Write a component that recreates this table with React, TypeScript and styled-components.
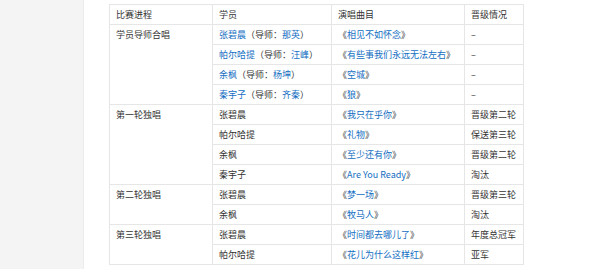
import React from "react";
import styled, { createGlobalStyle } from "styled-components";

const Global = createGlobalStyle`
  html, body { margin: 0; padding: 0; background: #ffffff; }
  body { font-family: "Noto Sans CJK SC", "Liberation Sans", sans-serif; }
`;

const Page = styled.div`
  display: flex;
  width: 600px;
  height: 269px;
  overflow: hidden;
`;

const Sidebar = styled.div`
  width: 84px;
  flex: none;
  background: #f4f4f4;
  border-right: 1px solid #ececec;
  box-sizing: border-box;
`;

const Main = styled.div`
  flex: 1;
  padding: 4px 0 0 25px;
  background: #ffffff;
`;

const Table = styled.table`
  border-collapse: collapse;
  table-layout: fixed;
  width: 414px;
  font-size: 9px;
  color: #333;
`;

const Row = styled.tr`
  height: 20px;
`;

const Cell = styled.td<{ $head?: boolean }>`
  border: 1px solid #e6e6e6;
  padding: 0 6px;
  line-height: 19px;
  vertical-align: top;
  white-space: nowrap;
  overflow: hidden;
  color: #333;
`;

const Link = styled.a`
  color: #136ec2;
  text-decoration: none;
`;

type Entry = {
  name: string;
  mentor?: string;
  song: string;
  result: string;
};

type Stage = { title: string; entries: Entry[] };

const stages: Stage[] = [
  {
    title: "学员导师合唱",
    entries: [
      { name: "张碧晨", mentor: "那英", song: "相见不如怀念", result: "–" },
      { name: "帕尔哈提", mentor: "汪峰", song: "有些事我们永远无法左右", result: "–" },
      { name: "余枫", mentor: "杨坤", song: "空城", result: "–" },
      { name: "秦宇子", mentor: "齐秦", song: "狼", result: "–" },
    ],
  },
  {
    title: "第一轮独唱",
    entries: [
      { name: "张碧晨", song: "我只在乎你", result: "晋级第二轮" },
      { name: "帕尔哈提", song: "礼物", result: "保送第三轮" },
      { name: "余枫", song: "至少还有你", result: "晋级第二轮" },
      { name: "秦宇子", song: "Are You Ready", result: "淘汰" },
    ],
  },
  {
    title: "第二轮独唱",
    entries: [
      { name: "张碧晨", song: "梦一场", result: "晋级第三轮" },
      { name: "余枫", song: "牧马人", result: "淘汰" },
    ],
  },
  {
    title: "第三轮独唱",
    entries: [
      { name: "张碧晨", song: "时间都去哪儿了", result: "年度总冠军" },
      { name: "帕尔哈提", song: "花儿为什么这样红", result: "亚军" },
    ],
  },
];

export default function App() {
  return (
    <>
      <Global />
      <Page>
        <Sidebar />
        <Main>
          <Table>
            <colgroup>
              <col style={{ width: 103 }} />
              <col style={{ width: 119 }} />
              <col style={{ width: 133 }} />
              <col style={{ width: 59 }} />
            </colgroup>
            <tbody>
              <Row>
                <Cell>比赛进程</Cell>
                <Cell>学员</Cell>
                <Cell>演唱曲目</Cell>
                <Cell>晋级情况</Cell>
              </Row>
              {stages.map((stage) =>
                stage.entries.map((e, i) => (
                  <Row key={stage.title + i}>
                    {i === 0 && <Cell rowSpan={stage.entries.length}>{stage.title}</Cell>}
                    <Cell>
                      {e.mentor ? (
                        <>
                          <Link href="#">{e.name}</Link>（导师：<Link href="#">{e.mentor}</Link>）
                        </>
                      ) : (
                        e.name
                      )}
                    </Cell>
                    <Cell>
                      《<Link href="#">{e.song}</Link>》
                    </Cell>
                    <Cell>{e.result}</Cell>
                  </Row>
                ))
              )}
            </tbody>
          </Table>
        </Main>
      </Page>
    </>
  );
}
